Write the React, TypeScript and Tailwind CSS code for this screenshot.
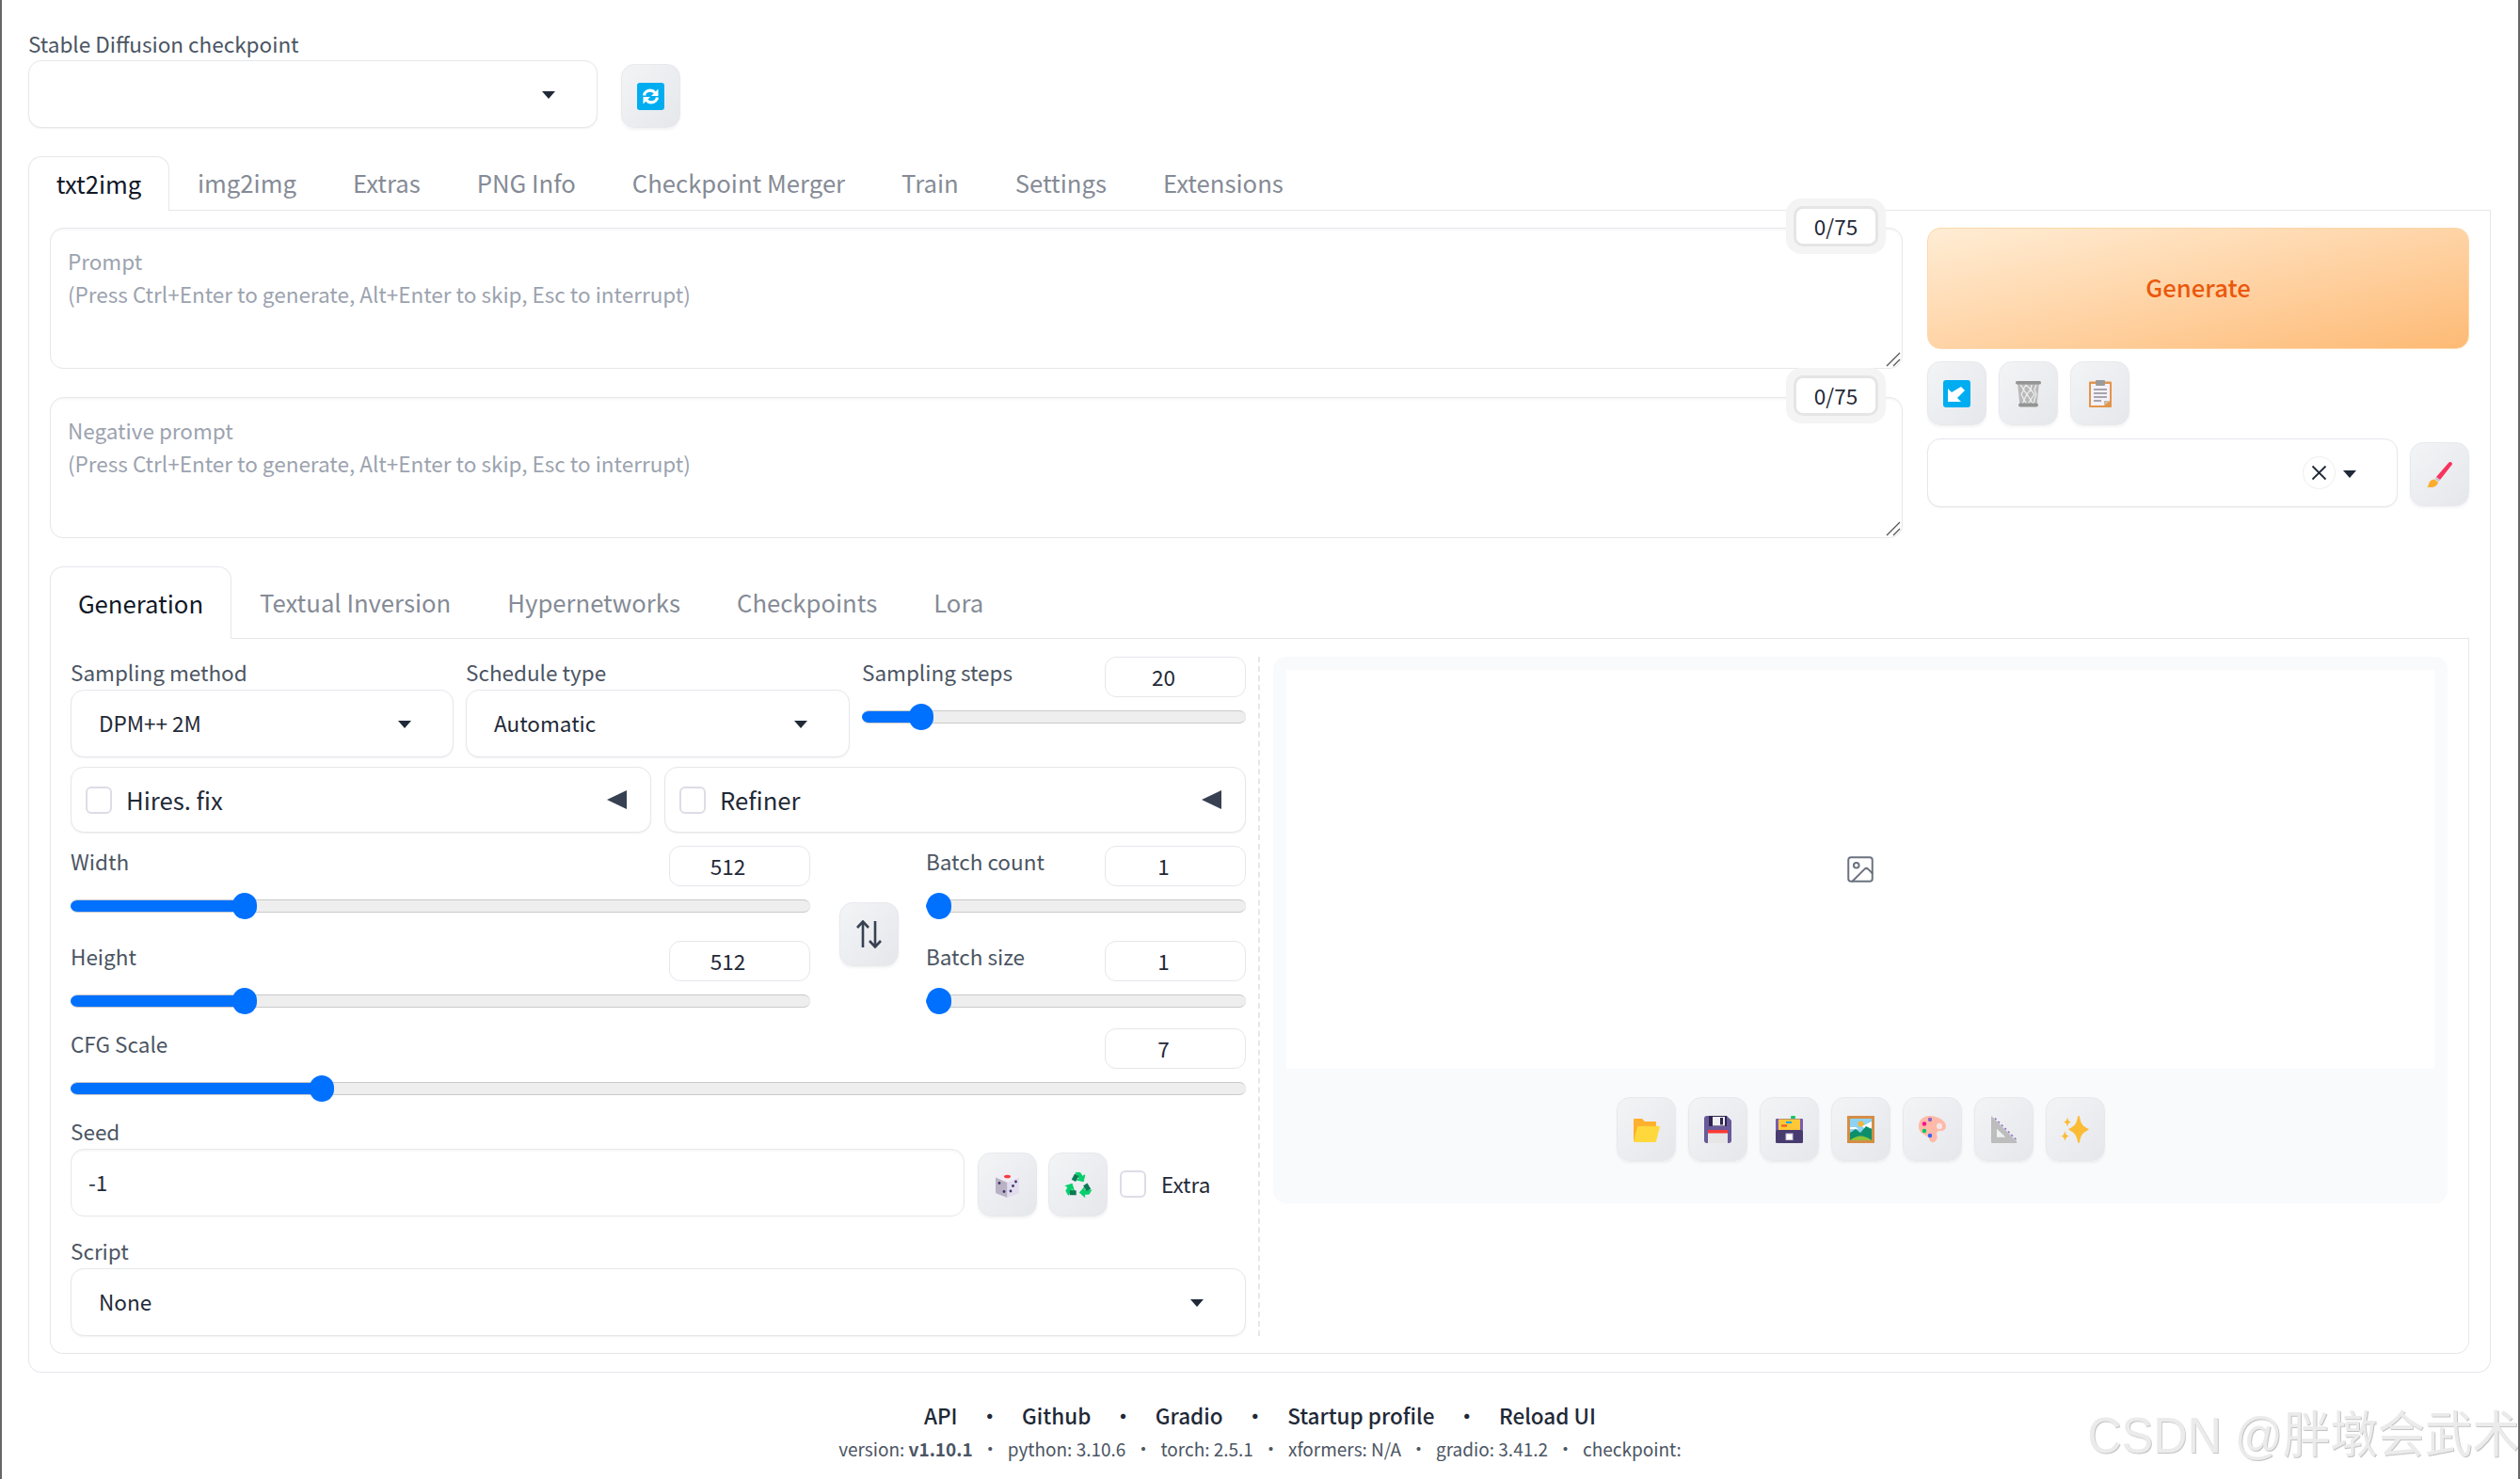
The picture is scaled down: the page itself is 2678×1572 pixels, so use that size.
import type { ReactNode } from 'react'
import { Image } from 'lucide-react'

const FONT = "font-['Noto_Sans_CJK_SC','Noto_Sans',sans-serif]"

const mainTabs = ['img2img', 'Extras', 'PNG Info', 'Checkpoint Merger', 'Train', 'Settings', 'Extensions']
const subTabs = ['Textual Inversion', 'Hypernetworks', 'Checkpoints', 'Lora']

const Caret = () => (
  <svg width="14" height="8" viewBox="0 0 14 8" className="mt-[2px] shrink-0">
    <path d="M0 0h14L7 8z" fill="#1f2937" />
  </svg>
)

function ToolButton({ children, className = '' }: { children: ReactNode; className?: string }) {
  return (
    <button
      className={`flex h-[68px] w-[63px] shrink-0 items-center justify-center rounded-[14px] border border-[#e8e9ed] bg-gradient-to-br from-[#f3f4f6] to-[#e5e7eb] shadow-[0_2px_3px_rgba(0,0,0,0.05)] ${className}`}
    >
      {children}
    </button>
  )
}

function Dropdown({ value, className = '' }: { value?: string; className?: string }) {
  return (
    <div
      className={`flex h-[72px] items-center justify-between rounded-[14px] border border-[#e5e7eb] bg-white pl-[29px] pr-[44px] shadow-[0_1px_2px_rgba(0,0,0,0.06)] ${className}`}
    >
      <span className="text-[22.5px] text-[#1f2937]">{value}</span>
      <Caret />
    </div>
  )
}

function Checkbox() {
  return <span className="block h-[29px] w-[28px] shrink-0 rounded-[6px] border-2 border-[#dcdde6] bg-white" />
}

function NumberBox({ value }: { value: string }) {
  return (
    <div className="flex h-[43px] w-[150px] items-center justify-center rounded-[12px] border border-[#e5e7eb] bg-white pr-[25px] text-[22.5px] leading-none text-[#1f2937]">
      {value}
    </div>
  )
}

function Track({ percent }: { percent: number }) {
  return (
    <div className="relative mt-[6px] flex h-[28px] items-center">
      <div className="h-[14px] w-full overflow-hidden rounded-full border-y border-[#c9c9c9] bg-[#eeeeee]">
        <div className="h-full bg-[#0070ff]" style={{ width: `${percent}%` }} />
      </div>
      <span
        className="absolute top-0 h-[28px] w-[26px] -translate-x-1/2 rounded-full bg-[#0070ff]"
        style={{ left: `${percent}%` }}
      />
    </div>
  )
}

function Slider({ label, value, percent, className = '' }: { label: string; value: string; percent: number; className?: string }) {
  return (
    <div className={className}>
      <div className="flex h-[44px] items-start justify-between">
        <span className="text-[22.5px] leading-[32px] text-[#4b5563]">{label}</span>
        <NumberBox value={value} />
      </div>
      <Track percent={percent} />
    </div>
  )
}

function Counter() {
  return (
    <div className="absolute right-[17px] top-[-32px] rounded-[16px] bg-[#f4f4f5] p-[8px]">
      <div className="flex h-[43px] w-[90px] items-center justify-center rounded-[10px] border-[3px] border-[#e5e5e5] bg-white text-[22.5px] leading-none text-[#1f2937]">
        0/75
      </div>
    </div>
  )
}

function PromptBox({ label }: { label: string }) {
  return (
    <div className="relative h-[150px] rounded-[14px] border border-[#e5e7eb] bg-white pl-[18px] pt-[17px] text-[22.5px] leading-[35px] text-[#9ca3af] shadow-[inset_0_2px_2px_rgba(0,0,0,0.03)]">
      <div>{label}</div>
      <div>(Press Ctrl+Enter to generate, Alt+Enter to skip, Esc to interrupt)</div>
      <Counter />
      <svg width="16" height="16" viewBox="0 0 16 16" className="absolute bottom-[1px] right-[1px]">
        <path d="M1 15 15 1M8 15l7-7" stroke="#555" strokeWidth="1.3" />
      </svg>
    </div>
  )
}

const RefreshIcon = () => (
  <svg width="29" height="29" viewBox="0 0 29 29">
    <rect width="29" height="29" rx="3" fill="#00adf0" />
    <path d="M7.500 13.500c.4-3 3-5.300 6.500-5.300 2.200 0 3.800 .8 5 2.300M21.500 15.500c-.4 3-3 5.300-6.500 5.300-2.200 0-3.800-.8-5-2.300" fill="none" stroke="#fff" strokeWidth="3.200" />
    <path d="M22.500 6.500v7.500h-7.500zM6.500 22.500v-7.500h7.500z" fill="#fff" />
  </svg>
)

const ArrowIcon = () => (
  <svg width="29" height="29" viewBox="0 0 29 29">
    <rect width="29" height="29" rx="3" fill="#00adf0" />
    <path d="M20 6l4 4-8 8 4 4H6V8l4 4z" fill="#fff" transform="translate(-1 1)" />
  </svg>
)

const TrashIcon = () => (
  <svg width="29" height="29" viewBox="0 0 29 29">
    <path d="M3 3h23l-2.500 24h-18z" fill="#b9b9b9" />
    <path d="M6 5l4 5-3 5 3 6-2 5M12 5l-3 5 4 5-3 6 3 5M12 5l5 5-4 5 4 6-3 5M18 5l-1 5 4 5-4 6 3 5M23 5l-2 5 2 5-2 6-1 5" fill="none" stroke="#ececec" strokeWidth="1.300" />
    <rect x="1" y="1" width="27" height="3.400" rx="1.500" fill="#949494" />
    <rect x="4" y="24.500" width="21" height="4" rx="2" fill="#949494" />
  </svg>
)

const ClipboardIcon = () => (
  <svg width="24" height="29" viewBox="0 0 24 29">
    <rect y="1.500" width="24" height="27.500" rx="1" fill="#e2954a" />
    <path d="M2 4h20v18l-6 5H2z" fill="#f4f1f8" />
    <path d="M16 27l6-5h-6z" fill="#c9b9a8" />
    <rect x="7" y="0" width="10" height="6" rx="1" fill="#9b9b9b" />
    <path d="M5 10h14M5 14h14M5 18h14M5 22h8" stroke="#8c8a94" strokeWidth="1.300" />
  </svg>
)

const BrushIcon = () => (
  <svg width="29" height="29" viewBox="0 0 29 29">
    <path d="M27 1.500c1 .7 1.300 1.500.8 2.300L15 20l-4-3L24 2c.9-.9 2-1.200 3-.5z" fill="#f9325f" />
    <path d="M11 17l4 3-1.500 2-4-3z" fill="#c6c3cf" />
    <path d="M9 19.500l4 3c-.4 3-3.500 5.500-7.500 5.500-2.500 0-4.500-.5-4.500-1 2 0 1.500-2 2.500-4 1-2 3-3.500 5.500-3.500z" fill="#fbad2e" />
  </svg>
)

const DiceIcon = () => (
  <svg width="29" height="29" viewBox="0 0 29 29">
    <path d="M14.500 1 27 6.500 14.500 12 2 6.500z" fill="#f0ecf4" />
    <path d="M2 6.500 14.500 12v16L3 23.500q-1-.5-1-1.500z" fill="#b9b2c4" />
    <path d="M27 6.500 14.500 12v16L26 23.500q1-.5 1-1.500z" fill="#e2dcee" />
    <ellipse cx="14.500" cy="5.500" rx="3.500" ry="1.800" fill="#f93a3f" />
    <circle cx="6" cy="12.500" r="1.400" fill="#3d3468" />
    <circle cx="11" cy="21.500" r="1.400" fill="#3d3468" />
    <circle cx="23.500" cy="11" r="1.400" fill="#3d3468" />
    <circle cx="20.500" cy="15.500" r="1.400" fill="#3d3468" />
    <circle cx="18" cy="21" r="1.400" fill="#3d3468" />
  </svg>
)

const RecycleIcon = () => (
  <svg width="30" height="29" viewBox="0 0 30 30">
    {[0, 120, 240].map(a => (
      <g key={a} transform={`rotate(${a} 15 16)`}>
        <path d="M12 1.500h5l2.500 4 2.500-1.500-1.500 7-7-1.500 2.500-1.500-1.500-2.500z" fill="#06cf6b" stroke="#06cf6b" />
        <path d="M7.500 9 11 2.500l4.500 3-3.500 6z" fill="#0a7a55" />
      </g>
    ))}
  </svg>
)

const FolderIcon = () => (
  <svg width="29" height="29" viewBox="0 0 29 29">
    <path d="M1 4q0-1 1-1h8l3 3h11q1 0 1 1v20H2q-1 0-1-1z" fill="#ffb02e" />
    <path d="M6 11h22q1 0 .8 1L25 27q-.2 1-1.200 1H2q-1 0-.8-1L5 12q.2-1 1-1z" fill="#ffd83b" />
  </svg>
)

const FloppyIcon = () => (
  <svg width="29" height="29" viewBox="0 0 29 29">
    <path d="M3 0h21l5 5v21q0 3-3 3H3q-3 0-3-3V3q0-3 3-3z" fill="#6a5a9a" />
    <path d="M5 0h19v11H5z" fill="#2f2450" />
    <rect x="9" y="1" width="13" height="9.500" fill="#f0eff2" />
    <rect x="17" y="2" width="3" height="7.500" fill="#2f2450" />
    <rect x="4" y="15" width="21" height="14" fill="#e6e6e6" />
    <rect x="4" y="15" width="21" height="3.500" fill="#fa3a33" />
  </svg>
)

const FileBoxIcon = () => (
  <svg width="29" height="29" viewBox="0 0 29 29">
    <rect x="16" y="0" width="5" height="3" rx="1" fill="#15c66a" />
    <rect y="3" width="29" height="13" rx="1" fill="#7b5bb0" />
    <rect x="3" y="3.500" width="23" height="12" fill="#fdc835" />
    <rect x="11" y="6" width="6" height="2" fill="#0aa8ef" />
    <rect x="6" y="9.500" width="6" height="2" fill="#f4501e" />
    <rect y="15" width="29" height="14" rx="1.500" fill="#483b70" />
    <rect x="11" y="19" width="7" height="6.500" fill="#fff" stroke="#c7c2d4" />
  </svg>
)

const PictureIcon = () => (
  <svg width="29" height="29" viewBox="0 0 29 29">
    <rect width="29" height="29" fill="#d68d45" />
    <rect x="3" y="3" width="23" height="23" fill="#8dd3f5" />
    <circle cx="14.500" cy="8.500" r="3" fill="#fcb42c" />
    <path d="M3 12h6l3 2H3z" fill="#fff" />
    <path d="M26 6l-6 3-4 2 2 2h8z" fill="#fff" />
    <path d="M3 18l6-4 5 4 6-7 6 3v12H3z" fill="#0d8f6b" />
    <path d="M3 26q11-9 23 0z" fill="#8ec33a" />
  </svg>
)

const PaletteIcon = () => (
  <svg width="29" height="30" viewBox="0 0 29 30">
    <path d="M12 1c8 0 17 5 17 11 0 4-3 5-6 5-2 0-4 .5-4 3 0 2 2 3 0 6-1 2-3 4-5 3-3-1-2-4-5-6-3-3-9-3-9-11C0 5 5 1 12 1z" fill="#ffb9a8" />
    <ellipse cx="22" cy="12" rx="3" ry="3.200" fill="#f4e6e6" />
    <circle cx="12" cy="5" r="2.200" fill="#8d65c5" />
    <circle cx="6" cy="9.500" r="2.200" fill="#f8108c" />
    <circle cx="6" cy="17" r="2.200" fill="#00c95f" />
    <circle cx="12" cy="22" r="2.200" fill="#3464ff" />
  </svg>
)

const RulerIcon = () => (
  <svg width="29" height="29" viewBox="0 0 29 29">
    <path d="M1 1q0-1 1-.2L28 27q1 2-1 2H2q-1 0-1-1zM7 14v8.500h9z" fill="#bdbdbd" fillRule="evenodd" />
    <path d="M5 2.500l1.500 1.500M8.500 6l1.500 1.500M12 9.500l1.500 1.500M15.500 13l1.500 1.500M19 16.500l1.500 1.500M22.500 20l1.500 1.500M26 23.500l1.500 1.500" stroke="#8d65c5" strokeWidth="1.400" />
    <path d="M7 14v8.500h9z" fill="#eef0f2" />
  </svg>
)

const SparklesIcon = () => (
  <svg width="30" height="29" viewBox="0 0 30 29">
    <path d="M19 0c.5 0 .9.500 1.200 2 1 6 3 9 9 11.800.5.300.5.900 0 1.200-6 3-8 6-9 11.800-.3 1.500-.7 2.200-1.200 2.200s-.9-.7-1.200-2.200c-1-5.800-3-8.800-9-11.800-.5-.3-.5-.9 0-1.200 6-2.800 8-5.800 9-11.800.3-1.500.7-2 1.200-2z" fill="#fcbb34" />
    <path d="M7 1.500c.8 3.500 1.500 4.500 4 5-2.500.8-3.200 1.800-4 5-.8-3.200-1.500-4.200-4-5 2.500-.5 3.200-1.500 4-5z" fill="#fcbb34" />
    <path d="M4.500 16c.8 3.800 1.500 4.800 4.500 5.500-3 .8-3.700 1.800-4.500 5.500-.8-3.700-1.500-4.700-4.500-5.500 3-.7 3.700-1.700 4.500-5.500z" fill="#fcbb34" />
  </svg>
)

const outputIcons = [FolderIcon, FloppyIcon, FileBoxIcon, PictureIcon, PaletteIcon, RulerIcon, SparklesIcon]

export default function App() {
  return (
    <div className={`${FONT} relative h-[1572px] w-full overflow-hidden border-x-2 border-[#666] bg-white`}>
      <div className="ml-[28px] w-[2617px] pt-[31px]">
        <div className="h-[33px] text-[22.5px] leading-[30px] text-[#4b5563]">Stable Diffusion checkpoint</div>
        <div className="flex items-start">
          <Dropdown className="w-[605px] pr-[36px]" />
          <ToolButton className="ml-[25px] mt-[4px]">
            <RefreshIcon />
          </ToolButton>
        </div>

        {/* main tabs */}
        <div className="mt-[30px] flex h-[58px] border-b border-[#e5e7eb]">
          <div className="-mb-px flex h-[58px] w-[150px] items-center justify-center rounded-t-[14px] border border-b-0 border-[#e5e7eb] bg-white text-[25.7px] text-[#111827]">
            txt2img
          </div>
          {mainTabs.map(t => (
            <div key={t} className="flex items-center px-[30px] text-[25.7px] text-[#858b96]">
              {t}
            </div>
          ))}
        </div>

        <div className="h-[1235px] rounded-b-[14px] border-x border-b border-[#e5e7eb] px-[22px] pt-[18px]">
          <div className="flex h-[330px] gap-[26px]">
            <div className="flex w-[1969px] flex-col gap-[30px]">
              <PromptBox label="Prompt" />
              <PromptBox label="Negative prompt" />
            </div>
            <div className="w-[576px]">
              <button className="flex h-[129px] w-full items-center justify-center rounded-[14px] border border-[#fed7aa] bg-gradient-to-br from-[#ffedd5] to-[#fdba74] pb-[2px] text-[25.7px] font-medium text-[#ea580c]">
                Generate
              </button>
              <div className="mt-[13px] flex gap-[13px]">
                <ToolButton><ArrowIcon /></ToolButton>
                <ToolButton><TrashIcon /></ToolButton>
                <ToolButton><ClipboardIcon /></ToolButton>
              </div>
              <div className="mt-[14px] flex items-start gap-[12px]">
                <div className="flex h-[73px] w-[500px] items-center justify-end rounded-[14px] border border-[#e5e7eb] bg-white pr-[43px] shadow-[0_1px_2px_rgba(0,0,0,0.06)]">
                  <span className="mr-[8px] flex h-[35px] w-[35px] items-center justify-center rounded-full border border-[#eeeeee]">
                    <svg width="17" height="17" viewBox="0 0 17 17">
                      <path d="M1.500 1.500l14 14M15.500 1.500l-14 14" stroke="#1f2937" strokeWidth="1.800" />
                    </svg>
                  </span>
                  <Caret />
                </div>
                <ToolButton className="mt-[4px] ml-auto"><BrushIcon /></ToolButton>
              </div>
            </div>
          </div>

          {/* sub tabs */}
          <div className="mt-[30px] flex h-[77px] border-b border-[#e5e7eb]">
            <div className="-mb-px flex h-[77px] w-[193px] items-center justify-center rounded-t-[14px] border border-b-0 border-[#e5e7eb] bg-white text-[25.7px] text-[#111827]">
              Generation
            </div>
            {subTabs.map(t => (
              <div key={t} className="flex items-center px-[30px] text-[25.7px] text-[#858b96]">
                {t}
              </div>
            ))}
          </div>

          <div className="flex h-[760px] rounded-b-[14px] border-x border-b border-[#e5e7eb] pl-[21px] pt-[19px]">
            {/* left column */}
            <div className="w-[1249px] shrink-0">
              <div className="flex gap-[13px]">
                <div className="w-[407px]">
                  <div className="h-[35px] text-[22.5px] leading-[32px] text-[#4b5563]">Sampling method</div>
                  <Dropdown value="DPM++ 2M" />
                </div>
                <div className="w-[408px]">
                  <div className="h-[35px] text-[22.5px] leading-[32px] text-[#4b5563]">Schedule type</div>
                  <Dropdown value="Automatic" />
                </div>
                <Slider label="Sampling steps" value="20" percent={15.500} className="w-[408px]" />
              </div>

              <div className="mt-[10px] flex gap-[14px]">
                {['Hires. fix', 'Refiner'].map((t, i) => (
                  <div
                    key={t}
                    className={`flex h-[70px] items-center rounded-[14px] border border-[#e5e7eb] bg-white pl-[15px] pr-[25px] shadow-[0_1px_2px_rgba(0,0,0,0.06)] ${i === 0 ? 'w-[617px]' : 'w-[618px]'}`}
                  >
                    <Checkbox />
                    <span className="ml-[15px] text-[25.7px] text-[#1f2937]">{t}</span>
                    <svg width="21" height="20" viewBox="0 0 21 20" className="ml-auto">
                      <path d="M21 0v20L0 10z" fill="#374151" />
                    </svg>
                  </div>
                ))}
              </div>

              <div className="mt-[14px] flex items-start">
                <div className="flex w-[786px] flex-col gap-[23px]">
                  <Slider label="Width" value="512" percent={23.500} />
                  <Slider label="Height" value="512" percent={23.500} />
                </div>
                <ToolButton className="ml-[31px] mt-[60px]">
                  <svg width="27" height="30" viewBox="0 0 27 30">
                    <path d="M7 29V2M1 8l6-6.500L13 8M20 1v27M14 22l6 6.500 6-6.500" fill="none" stroke="#374151" strokeWidth="2.600" />
                  </svg>
                </ToolButton>
                <div className="ml-[29px] flex w-[340px] flex-col gap-[23px]">
                  <Slider label="Batch count" value="1" percent={4} />
                  <Slider label="Batch size" value="1" percent={4} />
                </div>
              </div>

              <Slider label="CFG Scale" value="7" percent={21.400} className="mt-[15px]" />

              <div className="mt-[16px] h-[34px] text-[22.5px] leading-[30px] text-[#4b5563]">Seed</div>
              <div className="flex items-start">
                <div className="flex h-[72px] w-[950px] items-center rounded-[14px] border border-[#e5e7eb] bg-white pl-[18px] text-[22.5px] text-[#1f2937] shadow-[inset_0_2px_2px_rgba(0,0,0,0.03)]">
                  -1
                </div>
                <ToolButton className="ml-[14px] mt-[4px]"><DiceIcon /></ToolButton>
                <ToolButton className="ml-[12px] mt-[4px]"><RecycleIcon /></ToolButton>
                <div className="ml-[13px] mt-[23px] flex items-center gap-[16px] text-[22.5px] leading-[29px] text-[#1f2937]">
                  <Checkbox />
                  Extra
                </div>
              </div>

              <div className="mt-[21px] h-[34px] text-[22.5px] leading-[30px] text-[#4b5563]">Script</div>
              <Dropdown value="None" />
            </div>

            {/* output column */}
            <div className="ml-[13px] h-[722px] border-l-2 border-dashed border-[#e5e7eb]" />
            <div className="ml-[14px] h-[581px] w-[1248px] rounded-[14px] bg-[#f9fafb] px-[14px] pt-[14px]">
              <div className="flex h-[424px] items-center justify-center bg-white">
                <Image size={34} strokeWidth={1.400} className="text-[#6b7280]" />
              </div>
              <div className="mt-[30px] flex justify-center gap-[13px]">
                {outputIcons.map((Icon, i) => (
                  <ToolButton key={i}>
                    <Icon />
                  </ToolButton>
                ))}
              </div>
            </div>
          </div>
        </div>
      </div>

      {/* footer */}
      <div className="mt-[29px] flex justify-center gap-[23px] text-[22.5px] font-medium leading-[32px] text-[#1f2937]">
        <span>API</span>
        <span>•</span>
        <span>Github</span>
        <span>•</span>
        <span>Gradio</span>
        <span>•</span>
        <span>Startup profile</span>
        <span>•</span>
        <span>Reload UI</span>
      </div>
      <div className="mt-[5px] flex justify-center gap-[9px] text-[19px] leading-[30px] text-[#4b5563]">
        <span>version: <b className="font-semibold">v1.10.1</b></span>
        <span>•</span>
        <span>python: 3.10.6</span>
        <span>•</span>
        <span>torch: 2.5.1</span>
        <span>•</span>
        <span>xformers: N/A</span>
        <span>•</span>
        <span>gradio: 3.41.2</span>
        <span>•</span>
        <span>checkpoint:</span>
      </div>

      <div className="absolute right-[-2px] top-[1499px] origin-right scale-x-[0.95] whitespace-nowrap font-['Liberation_Sans','Noto_Sans_CJK_SC',sans-serif] text-[53px] leading-none text-[#ebebeb] [text-shadow:1px_1px_0_#c4c4c4]">
        CSDN @胖墩会武术
      </div>
    </div>
  )
}
